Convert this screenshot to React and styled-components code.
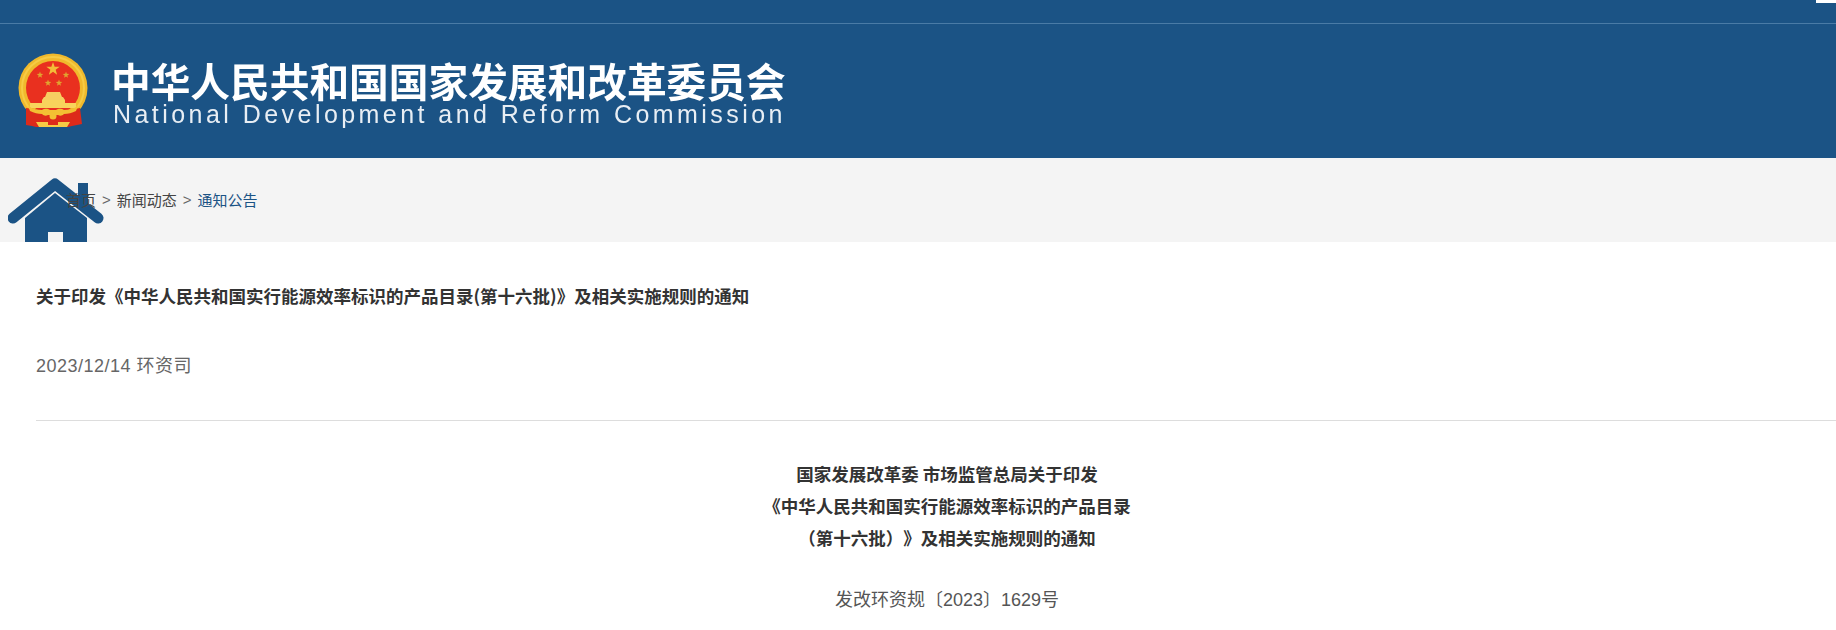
import React from "react";
import styled, { createGlobalStyle } from "styled-components";

const CJK = `"Noto Sans CJK SC", "Liberation Sans", sans-serif`;
const LATIN_CJK = `"Liberation Sans", "Noto Sans CJK SC", sans-serif`;
const Global = createGlobalStyle`
  html, body { margin: 0; padding: 0; background: #fff; overflow: hidden; }
  body { font-family: ${LATIN_CJK}; color: #333; }
`;
const Page = styled.div`width: 1836px; height: 630px; overflow: hidden;`;
const Header = styled.header`background: #1b5385; height: 158px; display: flex; flex-direction: column;`;
const TopBar = styled.div`height: 23px; border-bottom: 1px solid #4a7ba6; display: flex; justify-content: flex-end; align-items: flex-start;`;
const TopChip = styled.span`width: 20px; height: 3px; background: #fff;`;
const Brand = styled.div`display: flex; align-items: flex-start; padding: 29px 0 0 18px; gap: 21px;`;
const BrandText = styled.div`display: flex; flex-direction: column; color: #fff; width: 680px; filter: blur(0.35px);`;
const BrandCn = styled.div`font-family: ${CJK}; font-weight: 700; font-size: 39.7px; line-height: 44px; white-space: nowrap; margin-top: 5px;`;
const BrandEn = styled.div`font-family: "Liberation Sans", sans-serif; font-size: 25px; line-height: 24px; letter-spacing: 3.45px; margin-left: 2px; white-space: nowrap; color: #e8eef4;`;
const Crumbs = styled.nav`position: relative; height: 84px; background: #f4f4f4; overflow: hidden; display: flex; align-items: center; padding: 0 0 2px 66px; box-sizing: border-box; font-family: ${CJK}; font-size: 15px; gap: 6px;`;
const HomeIcon = styled.svg`position: absolute; left: 8px; top: 19px; width: 96px; height: 80px; filter: blur(0.6px);`;
const CrumbLabel = styled.span`position: relative; color: ${p => p.$active ? "#1b5385" : "#444"};`;
const Sep = styled.span`position: relative; font-family: "Liberation Sans", sans-serif; color: #666;`;
const Article = styled.main`padding: 0 0 0 36px; width: 1858px; box-sizing: border-box;`;
const Title = styled.h1`margin: 0; padding-top: 43px; font-family: ${CJK}; font-weight: 700; font-size: 17.5px; line-height: 22px; color: #333;`;
const Meta = styled.div`margin-top: 47px; padding-bottom: 42px; border-bottom: 1px solid #ddd; font-family: ${LATIN_CJK}; font-size: 18px; letter-spacing: 0.5px; line-height: 24px; color: #666;`;
const Body = styled.div`padding-top: 37px; text-align: center;`;
const Head = styled.p`margin: 0; font-family: ${CJK}; font-weight: 700; font-size: 17.5px; line-height: 32px; color: #333; text-spacing-trim: space-all;`;
const DocNo = styled.p`margin: 30px 0 0; font-family: ${LATIN_CJK}; font-size: 18px; line-height: 32px; color: #555;`;

const starPath = (cx, cy, r) => {
  let d = "";
  for (let i = 0; i < 10; i++) {
    const a = -Math.PI / 2 + (i * Math.PI) / 5;
    const rr = i % 2 ? r * 0.4 : r;
    d += `${i ? "L" : "M"}${(cx + rr * Math.cos(a)).toFixed(2)} ${(cy + rr * Math.sin(a)).toFixed(2)}`;
  }
  return d + "z";
};

const Emblem = () => (
  <svg width="72" height="76" viewBox="0 0 72 76" style={{ flex: "none", filter: "blur(0.4px)" }}>
    <circle cx="35" cy="35" r="34.5" fill="#f0b92c" />
    <circle cx="35" cy="35" r="31" fill="none" stroke="#f6cb45" strokeWidth="2" />
    <circle cx="35" cy="35" r="27" fill="#e9301f" />
    <path d={starPath(35, 16, 7)} fill="#f3bd38" />
    <path d={[starPath(22, 22, 3.5), starPath(48, 22, 3.5), starPath(30, 30, 3.5), starPath(41, 30, 3.5)].join("")} fill="#e0a32f" />
    <path d="M27 44l2-5h13l2 5zM24 47l2-3h19l2 3z" fill="#f6cf62" />
    <path d="M24 47h23v3H24zM12 50h46v5H12z" fill="#f8d45c" />
    <path d="M8 55l16 2 28 0 10-2 2 16-10 2-4 1H18l-4-1-6-1z" fill="#dd2a1a" />
    <path d="M10 53c5 3 10 4 14 4 3-2 6-1 8 0h6c2-1 5-2 8 0 4 0 9-1 14-4l-2 5c-4 2-8 3-12 3-2 2-4 2-6 1h-10c-2 1-4 1-6-1-4 0-8-1-12-3z" fill="#f3c033" />
    <circle cx="35" cy="63" r="3.5" fill="#f3c033" />
    <path d="M18 69h34l-3 5H21z" fill="#f6cb45" />
    <path d="M30 69h10v3H30z" fill="#dd2a1a" />
  </svg>
);

export default function App() {
  return (
    <Page>
      <Global />
      <Header>
        <TopBar><TopChip /></TopBar>
        <Brand>
          <Emblem />
          <BrandText>
            <BrandCn>中华人民共和国国家发展和改革委员会</BrandCn>
            <BrandEn>National Development and Reform Commission</BrandEn>
          </BrandText>
        </Brand>
      </Header>
      <Crumbs>
        <HomeIcon viewBox="0 0 96 80">
          <rect x="70" y="6" width="10" height="26" fill="#1b5385" />
          <path d="M5 41L47 7l43 34" fill="none" stroke="#1b5385" strokeWidth="11" strokeLinecap="round" strokeLinejoin="round" />
          <path d="M17 41L47 16l32 25v39H55V55H40v25H17z" fill="#1b5385" />
        </HomeIcon>
        <CrumbLabel>首页</CrumbLabel><Sep>&gt;</Sep>
        <CrumbLabel>新闻动态</CrumbLabel><Sep>&gt;</Sep>
        <CrumbLabel $active>通知公告</CrumbLabel>
      </Crumbs>
      <Article>
        <Title>关于印发《中华人民共和国实行能源效率标识的产品目录(第十六批)》及相关实施规则的通知</Title>
        <Meta>2023/12/14 环资司</Meta>
        <Body>
          <Head>国家发展改革委 市场监管总局关于印发</Head>
          <Head>《中华人民共和国实行能源效率标识的产品目录</Head>
          <Head>（第十六批）》及相关实施规则的通知</Head>
          <DocNo>发改环资规〔2023〕1629号</DocNo>
        </Body>
      </Article>
    </Page>
  );
}
